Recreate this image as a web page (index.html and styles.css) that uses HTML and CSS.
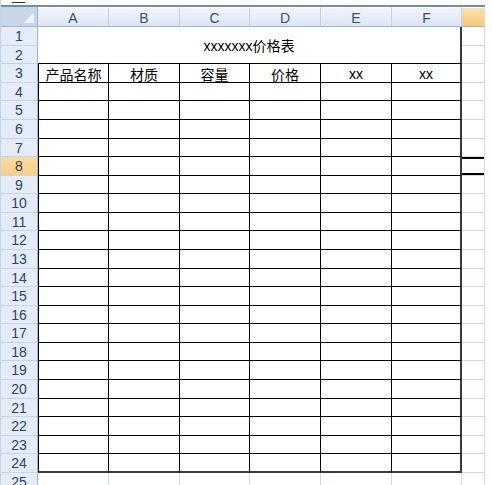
FILE: index.html
```html
<!DOCTYPE html>
<html lang="zh-CN">
<head>
<meta charset="utf-8">
<title>价格表</title>
<link rel="stylesheet" href="styles.css">
</head>
<body>
<div class="window">
  <div class="topbar"><span class="dash"></span></div>
  <div class="sheet">
    <div class="corner"></div>
    <div class="ch">A</div><div class="ch">B</div><div class="ch">C</div><div class="ch">D</div><div class="ch">E</div><div class="ch">F</div><div class="ch sel"></div>

    <div class="rh">1</div><div class="title">xxxxxxx价格表</div><div class="g"></div>
    <div class="rh">2</div><div class="g"></div>

    <div class="rh">3</div><div class="t a">产品名称</div><div class="t">材质</div><div class="t">容量</div><div class="t">价格</div><div class="t">xx</div><div class="t f">xx</div><div class="g"></div>
    <div class="rh">4</div><div class="t a"></div><div class="t"></div><div class="t"></div><div class="t"></div><div class="t"></div><div class="t f"></div><div class="g"></div>
    <div class="rh">5</div><div class="t a"></div><div class="t"></div><div class="t"></div><div class="t"></div><div class="t"></div><div class="t f"></div><div class="g"></div>
    <div class="rh">6</div><div class="t a"></div><div class="t"></div><div class="t"></div><div class="t"></div><div class="t"></div><div class="t f"></div><div class="g"></div>
    <div class="rh">7</div><div class="t a"></div><div class="t"></div><div class="t"></div><div class="t"></div><div class="t"></div><div class="t f"></div><div class="g"></div>
    <div class="rh sel">8</div><div class="t a"></div><div class="t"></div><div class="t"></div><div class="t"></div><div class="t"></div><div class="t f"></div><div class="g cur"></div>
    <div class="rh">9</div><div class="t a"></div><div class="t"></div><div class="t"></div><div class="t"></div><div class="t"></div><div class="t f"></div><div class="g"></div>
    <div class="rh">10</div><div class="t a"></div><div class="t"></div><div class="t"></div><div class="t"></div><div class="t"></div><div class="t f"></div><div class="g"></div>
    <div class="rh">11</div><div class="t a"></div><div class="t"></div><div class="t"></div><div class="t"></div><div class="t"></div><div class="t f"></div><div class="g"></div>
    <div class="rh">12</div><div class="t a"></div><div class="t"></div><div class="t"></div><div class="t"></div><div class="t"></div><div class="t f"></div><div class="g"></div>
    <div class="rh">13</div><div class="t a"></div><div class="t"></div><div class="t"></div><div class="t"></div><div class="t"></div><div class="t f"></div><div class="g"></div>
    <div class="rh">14</div><div class="t a"></div><div class="t"></div><div class="t"></div><div class="t"></div><div class="t"></div><div class="t f"></div><div class="g"></div>
    <div class="rh">15</div><div class="t a"></div><div class="t"></div><div class="t"></div><div class="t"></div><div class="t"></div><div class="t f"></div><div class="g"></div>
    <div class="rh">16</div><div class="t a"></div><div class="t"></div><div class="t"></div><div class="t"></div><div class="t"></div><div class="t f"></div><div class="g"></div>
    <div class="rh">17</div><div class="t a"></div><div class="t"></div><div class="t"></div><div class="t"></div><div class="t"></div><div class="t f"></div><div class="g"></div>
    <div class="rh">18</div><div class="t a"></div><div class="t"></div><div class="t"></div><div class="t"></div><div class="t"></div><div class="t f"></div><div class="g"></div>
    <div class="rh">19</div><div class="t a"></div><div class="t"></div><div class="t"></div><div class="t"></div><div class="t"></div><div class="t f"></div><div class="g"></div>
    <div class="rh">20</div><div class="t a"></div><div class="t"></div><div class="t"></div><div class="t"></div><div class="t"></div><div class="t f"></div><div class="g"></div>
    <div class="rh">21</div><div class="t a"></div><div class="t"></div><div class="t"></div><div class="t"></div><div class="t"></div><div class="t f"></div><div class="g"></div>
    <div class="rh">22</div><div class="t a"></div><div class="t"></div><div class="t"></div><div class="t"></div><div class="t"></div><div class="t f"></div><div class="g"></div>
    <div class="rh">23</div><div class="t a"></div><div class="t"></div><div class="t"></div><div class="t"></div><div class="t"></div><div class="t f"></div><div class="g"></div>
    <div class="rh">24</div><div class="t a b"></div><div class="t b"></div><div class="t b"></div><div class="t b"></div><div class="t b"></div><div class="t f b"></div><div class="g"></div>

    <div class="rh">25</div><div class="c"></div><div class="c"></div><div class="c"></div><div class="c"></div><div class="c"></div><div class="c"></div><div class="g"></div>
  </div>
</div>
</body>
</html>
```

FILE: styles.css
```css
html, body {
  margin: 0;
  padding: 0;
  background: #ffffff;
  overflow: hidden;
}

body {
  font-family: "Liberation Sans", "Noto Sans CJK SC", Arial, sans-serif;
}

.window {
  width: 485px;
  height: 485px;
  overflow: hidden;
  border-left: 1px solid #c9d3df;
  box-sizing: border-box;
}

.topbar {
  height: 7px;
  box-sizing: border-box;
  padding-top: 2px;
  border-bottom: 2px solid #6f8db5;
}

.dash {
  display: block;
  width: 13px;
  height: 1px;
  margin-left: 11px;
  background: #333333;
}

.sheet {
  display: grid;
  grid-template-columns: 37px 71px 71px 70px 71px 71px 70px 23px;
  grid-template-rows: 20px 19px 18px 19px 18px 19px 19px 18px 19px 18px 19px 18px 19px 19px 18px 19px 18px 19px 18px 19px 19px 18px 19px 18px 19px 19px;
}

.sheet > div {
  box-sizing: border-box;
  min-width: 0;
}

.corner {
  background-color: #c8d6ea;
  background-image: linear-gradient(to bottom right, transparent 50%, #eef3fa 50%);
  background-size: 10px 10px;
  background-position: right 3px bottom 3px;
  background-repeat: no-repeat;
  border-right: 1px solid #9eb6ce;
  border-bottom: 1px solid #9eb6ce;
}

.ch {
  display: flex;
  align-items: center;
  justify-content: center;
  background: linear-gradient(#f3f6fb, #dce5f1);
  border-right: 1px solid #c4d1e3;
  border-bottom: 1px solid #9eb6ce;
  border-top: 1px solid #ffffff;
  color: #3e5170;
  font-size: 14px;
  padding-top: 1px;
}

.ch.sel {
  background: linear-gradient(#fbe2b0, #f6c873);
  border-right: 1px solid #d9dee6;
}

.rh {
  display: flex;
  align-items: center;
  justify-content: center;
  background: #e4ecf7;
  border-right: 1px solid #9eb6ce;
  border-bottom: 1px solid #c6d4e7;
  color: #2c4468;
  font-size: 14px;
}

.rh.sel {
  background: linear-gradient(#fbdca4, #f8cf85);
  color: #3a3a3a;
}

.title {
  grid-column: 2 / 8;
  grid-row: span 2;
  display: flex;
  align-items: center;
  justify-content: center;
  border-right: 2px solid #3a3a3a;
  border-bottom: 1px solid #000000;
  font-size: 14px;
  color: #000000;
}

.t {
  display: flex;
  align-items: center;
  justify-content: center;
  border-right: 1px solid #000000;
  border-bottom: 1px solid #000000;
  font-size: 14px;
  color: #000000;
  padding-top: 1px;
}

.t.a {
  border-left: 1px solid #000000;
}

.t.f {
  border-right: 2px solid #3a3a3a;
}

.t.b {
  border-bottom: 2px solid #3a3a3a;
}

.c {
  border-right: 1px solid #d0d7e5;
  border-bottom: 1px solid #d0d7e5;
}

.g {
  border-right: 1px solid #d0d7e5;
  border-bottom: 1px solid #d0d7e5;
}

.g.cur {
  box-shadow: inset 0 2px #000000, inset 0 -2px #000000;
}
```
